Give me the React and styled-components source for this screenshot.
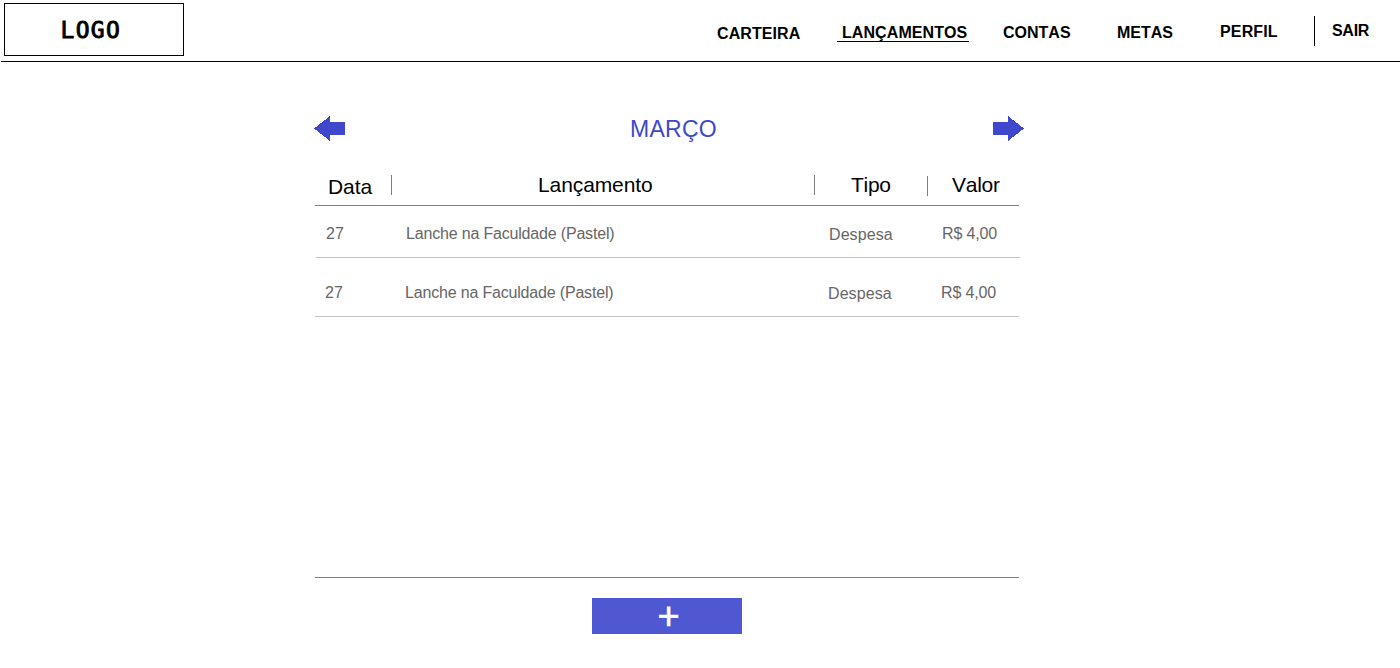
import React from "react";
import styled, { createGlobalStyle } from "styled-components";

const GlobalStyle = createGlobalStyle`
  * { box-sizing: border-box; }
  body {
    margin: 0;
    background: #fff;
    color: #000;
    font-family: "Liberation Sans", Arial, sans-serif;
    font-kerning: none;
  }
`;

const Header = styled.header`
  display: flex;
  justify-content: space-between;
  align-items: flex-start;
  height: 62px;
  margin-left: 1px;
  padding: 3px 30px 0 3px;
  border-bottom: 1px solid #000;
`;

const Logo = styled.div`
  width: 180px;
  height: 53px;
  padding-left: 55.5px;
  border: 1px solid #000;
  font: 23px/52px "DejaVu Sans Mono", monospace;
  letter-spacing: 1.3px;
  -webkit-text-stroke: 0.9px #000;
`;

const Nav = styled.nav`
  display: flex;
  align-items: flex-start;
`;

const NavItem = styled.a`
  margin-top: ${(p) => p.$top}px;
  margin-left: ${(p) => p.$gap}px;
  padding: 0 ${(p) => (p.$active ? "1px 0 5px" : "0")};
  height: 18px;
  width: ${(p) => p.$width}px;
  border-bottom: ${(p) => (p.$active ? "1px solid #000" : "none")};
  font-size: 16px;
  font-weight: bold;
  line-height: 18px;
  letter-spacing: ${(p) => p.$spacing || 0}px;
  white-space: nowrap;
`;

const NavDivider = styled.span`
  width: 1px;
  height: 30px;
  margin: 13px 0 0 35px;
  background: #000;
`;

const Main = styled.main`
  width: 710px;
  margin: 54px 0 0 314px;
`;

const MonthBar = styled.div`
  display: flex;
  justify-content: space-between;
  height: 25px;
`;

const Month = styled.h1`
  margin: 0 0 0 9px;
  color: #3f48cc;
  font-size: 23px;
  font-weight: normal;
  line-height: 27px;
  letter-spacing: 0.3px;
`;

const ArrowIcon = styled.svg`
  display: block;
  width: 31px;
  height: 25px;
  fill: #3f48cc;
`;

const Table = styled.section`
  width: 704px;
  height: 408px;
  margin: 29px 0 0 1px;
  padding-top: 5px;
  border-bottom: 1px solid #7f7f7f;
`;

const HeadRow = styled.div`
  display: grid;
  grid-template-columns: 77px 423px 113px 91px;
  height: 31px;
  border-bottom: 1px solid #7f7f7f;
`;

const HeadCell = styled.div`
  height: 20px;
  margin-top: ${(p) => p.$top || 0}px;
  padding-left: ${(p) => p.$left}px;
  border-right: ${(p) => (p.$last ? 0 : 1)}px solid #7f7f7f;
  font-size: 21px;
  line-height: ${(p) => p.$line || 20}px;
  letter-spacing: ${(p) => p.$spacing || -0.1}px;
`;

const Row = styled.div`
  display: grid;
  grid-template-columns: 80px 423px 113px 88px;
  align-items: end;
  height: ${(p) => p.$height}px;
  margin-left: ${(p) => p.$shift}px;
  margin-right: -${(p) => p.$shift}px;
  padding: 0 0 14px 10px;
  border-bottom: 1px solid #c3c3c3;
  color: #666;
`;

const Cell = styled.div`
  height: 18px;
  margin-bottom: ${(p) => p.$drop || 0}px;
  font-size: 16px;
  line-height: 18px;
  letter-spacing: ${(p) => p.$spacing || 0}px;
  white-space: nowrap;
`;

const AddButton = styled.button`
  display: block;
  width: 150px;
  height: 36px;
  margin: 20px 0 0 278px;
  padding: 0 0 0 3px;
  border: 0;
  background: #4f57d1;
  color: #fff;
  font: 38px/36px "Liberation Sans", Arial, sans-serif;
  -webkit-text-stroke: 0.6px #fff;
`;

const entries = [
  { day: "27", name: "Lanche na Faculdade (Pastel)", type: "Despesa", value: "R$ 4,00", height: 52, shift: 1 },
  { day: "27", name: "Lanche na Faculdade (Pastel)", type: "Despesa", value: "R$ 4,00", height: 59, shift: 0 },
];

export default function App() {
  return (
    <>
      <GlobalStyle />
      <Header>
        <Logo>LOGO</Logo>
        <Nav>
          <NavItem $top={22} $gap={0} $width={83} $spacing={0.08}>CARTEIRA</NavItem>
          <NavItem $top={21} $gap={37} $width={132} $spacing={0.08} $active>LANÇAMENTOS</NavItem>
          <NavItem $top={21} $gap={34} $width={68}>CONTAS</NavItem>
          <NavItem $top={21} $gap={46} $width={57}>METAS</NavItem>
          <NavItem $top={20} $gap={46} $width={59} $spacing={0.15}>PERFIL</NavItem>
          <NavDivider />
          <NavItem $top={19} $gap={17} $width={38} $spacing={-0.3}>SAIR</NavItem>
        </Nav>
      </Header>
      <Main>
        <MonthBar>
          <ArrowIcon viewBox="0 0 31 25" shapeRendering="crispEdges">
            <path d="M0 12.5 16 0V6H31V19H16V25Z" />
          </ArrowIcon>
          <Month>MARÇO</Month>
          <ArrowIcon viewBox="0 0 31 25" shapeRendering="crispEdges">
            <path d="M31 12.5 15 0V6H0V19H15V25Z" />
          </ArrowIcon>
        </MonthBar>
        <Table>
          <HeadRow>
            <HeadCell $left={13} $line={23}>Data</HeadCell>
            <HeadCell $left={146}>Lançamento</HeadCell>
            <HeadCell $left={36} $top={1} $line={18} $spacing={-0.3}>Tipo</HeadCell>
            <HeadCell $left={24} $spacing={-0.25} $last>Valor</HeadCell>
          </HeadRow>
          {entries.map((e, i) => (
            <Row key={i} $height={e.height} $shift={e.shift}>
              <Cell>{e.day}</Cell>
              <Cell $spacing={-0.18}>{e.name}</Cell>
              <Cell $drop={-1} $spacing={0.08}>{e.type}</Cell>
              <Cell $spacing={-0.14}>{e.value}</Cell>
            </Row>
          ))}
        </Table>
        <AddButton>+</AddButton>
      </Main>
    </>
  );
}
